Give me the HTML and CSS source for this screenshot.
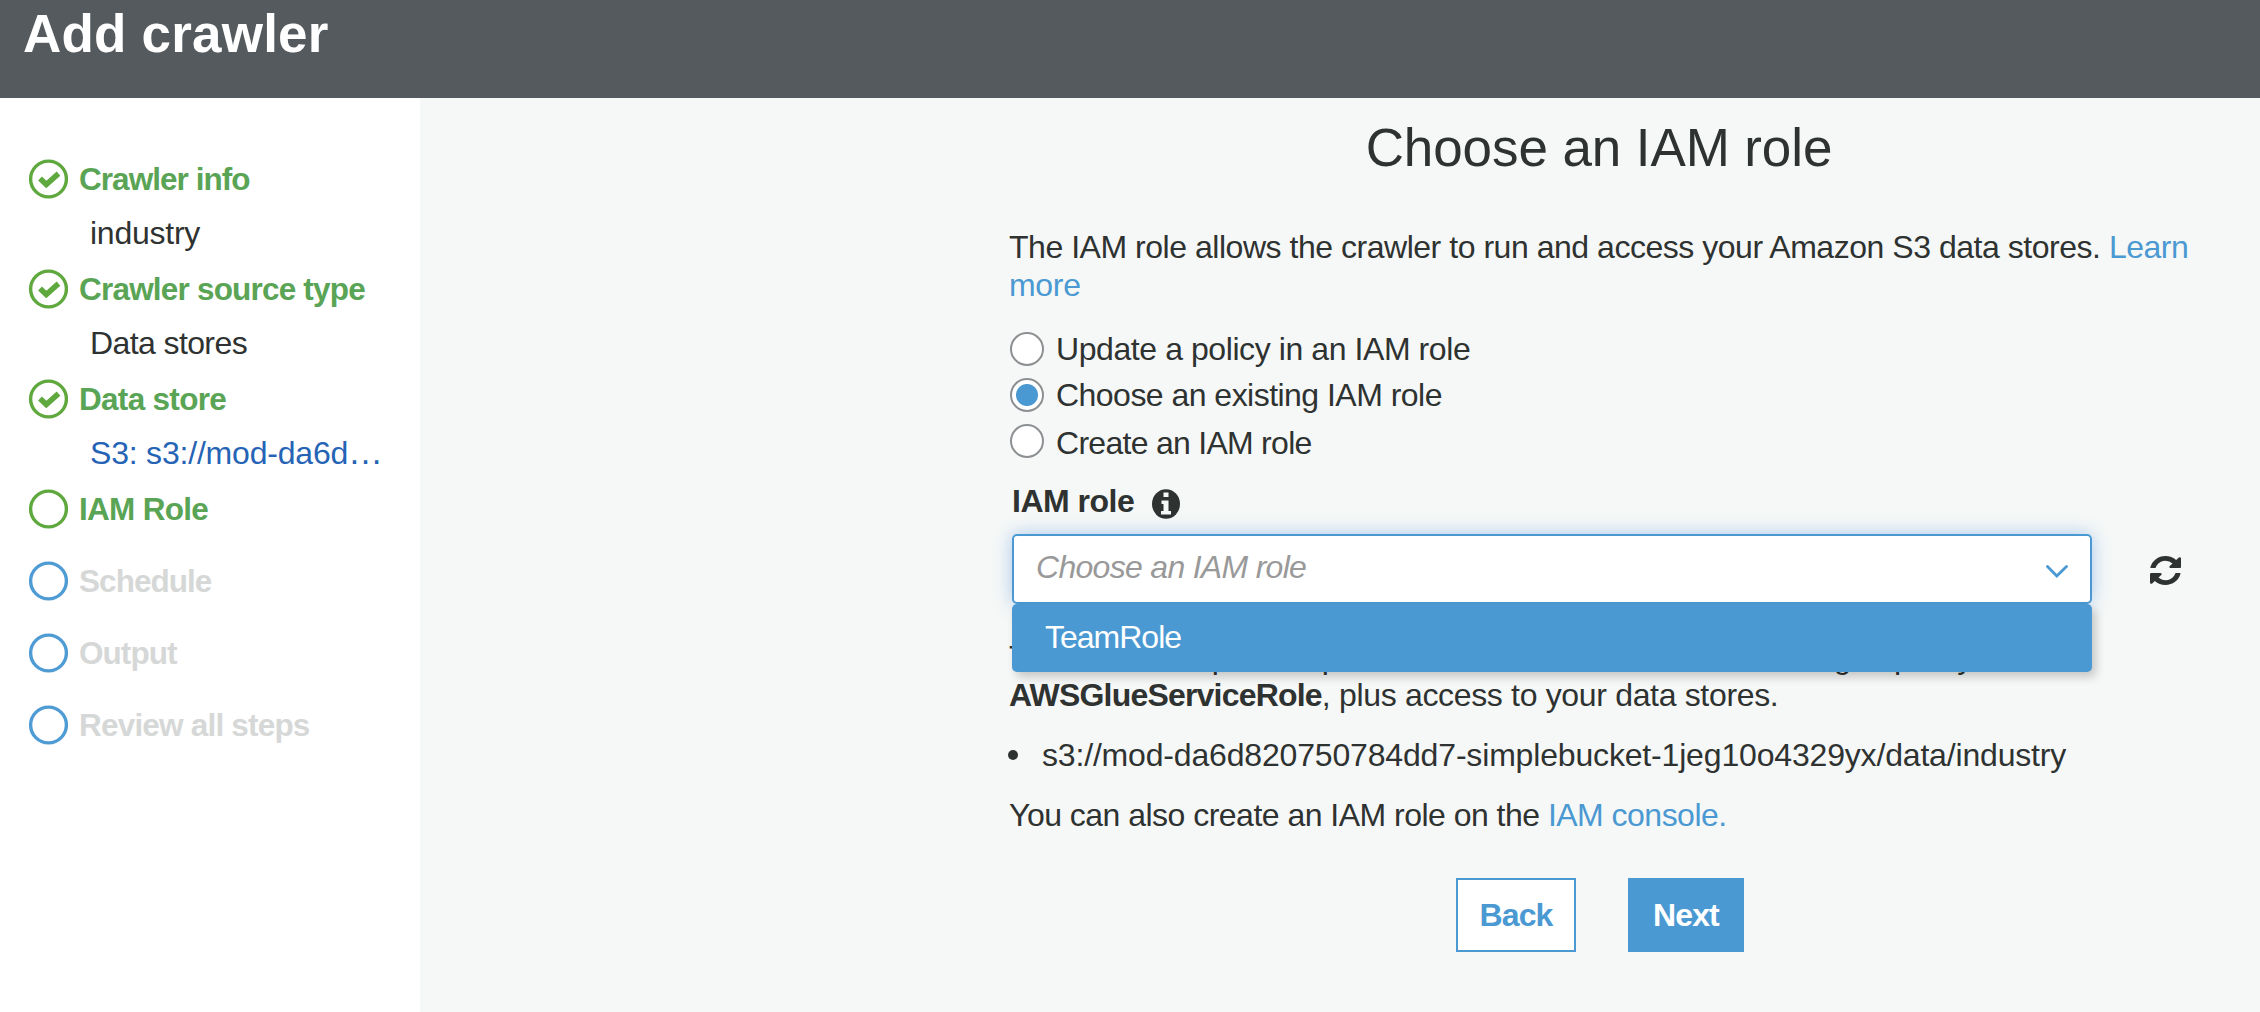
FILE: index.html
```html
<!DOCTYPE html>
<html lang="en">
<head>
<meta charset="utf-8">
<title>Add crawler</title>
<link rel="stylesheet" href="styles.css">
</head>
<body>
<header class="header"><h1 class="title"><span>Add crawler</span></h1></header>
<div class="layout">
  <nav class="sidebar">
    <div class="step done"><svg class="ring" viewBox="0 0 40 40"><circle cx="20.500" cy="20" r="17.900"/><path d="M12 19.500l6.300 6.100 12.200-11"/></svg><span class="name t-info">Crawler info</span></div>
    <div class="detail"><span class="t-ind">industry</span></div>
    <div class="step done"><svg class="ring" viewBox="0 0 40 40"><circle cx="20.500" cy="20" r="17.900"/><path d="M12 19.500l6.300 6.100 12.200-11"/></svg><span class="name t-src">Crawler source type</span></div>
    <div class="detail"><span class="t-stores">Data stores</span></div>
    <div class="step done"><svg class="ring" viewBox="0 0 40 40"><circle cx="20.500" cy="20" r="17.900"/><path d="M12 19.500l6.300 6.100 12.200-11"/></svg><span class="name t-store">Data store</span></div>
    <div class="detail link-dark"><span class="t-s3">S3: s3://mod-da6d<span class="dots">…</span></span></div>
    <div class="step done open"><svg class="ring" viewBox="0 0 40 40"><circle cx="20.500" cy="20" r="17.900"/></svg><span class="name t-role">IAM Role</span></div>
    <div class="step todo open"><svg class="ring" viewBox="0 0 40 40"><circle cx="20.500" cy="20" r="17.900"/></svg><span class="name t-sch">Schedule</span></div>
    <div class="step todo open"><svg class="ring" viewBox="0 0 40 40"><circle cx="20.500" cy="20" r="17.900"/></svg><span class="name t-out">Output</span></div>
    <div class="step todo open"><svg class="ring" viewBox="0 0 40 40"><circle cx="20.500" cy="20" r="17.900"/></svg><span class="name t-rev">Review all steps</span></div>
  </nav>
  <main class="main">
    <div class="panel">
      <h2 class="heading"><span>Choose an IAM role</span></h2>
      <p class="intro"><span class="t-intro">The IAM role allows the crawler to run and access your Amazon S3 data stores. <a>Learn</a></span><br><a class="t-more">more</a></p>
      <div class="radios">
        <label class="radio"><i class="knob"></i><span class="t-r1">Update a policy in an IAM role</span></label>
        <label class="radio"><i class="knob on"></i><span class="t-r2">Choose an existing IAM role</span></label>
        <label class="radio last"><i class="knob"></i><span class="t-r3">Create an IAM role</span></label>
      </div>
      <div class="field-label"><span class="t-lab">IAM role</span>
        <svg class="info" viewBox="0 0 28 30"><ellipse cx="14" cy="15" rx="14" ry="14.700"/><path d="M11.500 3.500h5v4.500h-5zM9.500 11.500h7v10.500h2.500v3.500h-10V22h2.500v-7h-2z"/></svg>
      </div>
      <div class="field">
        <div class="select">
          <span class="placeholder t-ph">Choose an IAM role</span>
          <svg class="chevron" viewBox="0 0 22 13"><path d="M1.500 1.500l9.300 9.500 9.700-9.500"/></svg>
          <div class="options"><span class="t-team">TeamRole</span></div>
        </div>
        <svg class="refresh" viewBox="0 0 1536 1536" preserveAspectRatio="none"><path d="M1511 928q0 5-1 7-64 268-268 434.500T764 1536q-146 0-282.500-55T238 1324l-129 129q-19 19-45 19t-45-19-19-45V960q0-26 19-45t45-19h448q26 0 45 19t19 45-19 45l-137 137q71 66 161 102t187 36q134 0 250-65t186-179q11-17 53-117 8-23 30-23h192q13 0 22.500 9.500t9.500 22.500zM1536 128v448q0 26-19 45t-45 19h-448q-26 0-45-19t-19-45 19-45l138-138Q969 256 768 256q-134 0-250 65T332 500q-11 17-53 117-8 23-30 23H50q-13 0-22.500-9.500T18 608v-7q65-268 270-434.500T768 0q146 0 284 55.500T1297 212l130-129q19-19 45-19t45 19 19 45z"/></svg>
      </div>
      <p class="policy"><span class="t-pol">This role must provide permissions similar to the AWS managed policy,</span><br><span class="t-glue"><b>AWSGlueServiceRole</b>, plus access to your data stores.</span></p>
      <ul class="paths"><li><span class="t-path">s3://mod-da6d820750784dd7-simplebucket-1jeg10o4329yx/data/industry</span></li></ul>
      <p class="note"><span class="t-note">You can also create an IAM role on the <a>IAM console.</a></span></p>
      <div class="actions"><button class="btn back">Back</button><button class="btn next">Next</button></div>
    </div>
  </main>
</div>
</body>
</html>
```
FILE: styles.css
```css
* { box-sizing: border-box; }
body { margin: 0; height: 1012px; overflow: hidden; background: #fff; color: #2e3231; font: 32px/38px "Liberation Sans", Arial, sans-serif; }
h1, h2, p, ul { margin: 0; padding: 0; }
a { color: #4b99d2; }
.header { height: 98px; background: #545a5d; color: #fff; padding: 4px 0 0 23px; }
.title { font-size: 53px; line-height: 60px; font-weight: bold; letter-spacing: .2px; }
.layout { display: flex; height: 914px; }
.sidebar { width: 420px; padding: 53px 0 0 28px; }
.step { display: flex; align-items: center; height: 55px; font-weight: bold; font-size: 31.5px; white-space: nowrap; }
.step.open { height: 72px; padding-bottom: 17px; }
.ring { width: 40px; height: 40px; margin-right: 11px; fill: none; stroke-width: 3.4; flex: none; }
.ring path { stroke-width: 5.5; }
.done { color: #5aa455; stroke: #5fa83e; }
.todo { color: #d6d8d7; stroke: #4f9cd5; }
.name { padding-top: 1px; }
.detail { height: 55px; padding: 8px 0 0 62px; white-space: nowrap; }
.link-dark { color: #2563b5; }
.main { flex: 1; background: #f6f8f7; display: flex; padding-left: 590px; }
.panel { width: 1180px; white-space: nowrap; }
.heading { padding: 20px 2px 0 0; height: 122px; font-size: 53px; line-height: 60px; font-weight: normal; text-align: center; letter-spacing: -.1px; }
.intro { height: 112px; padding: 8px 0 0; margin-left: -1px; }
.radio { display: flex; gap: 12px; height: 46px; }
.radio span { margin-top: -2px; }
.radio.last span { margin-top: 0; }
.knob { width: 34px; height: 34px; border: 2px solid #8d9092; border-radius: 50%; background: #fff; }
.knob.on { background: radial-gradient(circle, #4b99d2 10.5px, #fff 11.5px); }
.field-label { display: flex; align-items: center; gap: 18px; height: 64px; padding: 3px 0 0 2px; font-weight: bold; }
.field-label span { padding-bottom: 5px; }
.info { width: 28px; height: 30px; fill: #2e3231; }
.info path { fill: #f6f8f7; }
.field { display: flex; align-items: center; gap: 58px; padding-left: 2px; height: 70px; }
.select { position: relative; width: 1080px; height: 70px; border: 2px solid #4b99d2; border-radius: 5px; background: #fff; box-shadow: 0 0 18px rgba(75, 140, 225, .45); display: flex; align-items: center; justify-content: space-between; padding: 0 22px; }
.placeholder { color: #999; font-style: italic; padding-bottom: 5px; }
.chevron { width: 22px; height: 13px; fill: none; stroke: #4b99d2; stroke-width: 2.8; stroke-linecap: round; margin-top: 4px; }
.options { position: absolute; left: -2px; top: 68px; width: 1080px; height: 68px; padding: 14px 0 0 33px; border-radius: 5px; background: #4b99d2; color: #fff; box-shadow: 4px 5px 10px rgba(0, 0, 0, .2); }
.refresh { width: 31px; height: 29px; fill: #2e3231; margin-top: 3px; }
.policy { padding-top: 34px; height: 132px; margin-left: -1px; }
.paths { list-style: none; height: 60px; }
.paths li { display: flex; align-items: center; gap: 23px; }
.paths li::before { content: ""; width: 10px; height: 10px; margin-left: -2px; border-radius: 50%; background: #2e3231; }
.paths span { padding-left: 1px; }
.actions { display: flex; gap: 52px; padding: 44px 0 0 446px; }
.btn { height: 74px; border: 2px solid #4b99d2; font: bold 32px "Liberation Sans", Arial, sans-serif; letter-spacing: -.9px; padding: 0; }
.back { width: 120px; background: #fff; color: #4b99d2; }
.next { width: 116px; background: #4b99d2; color: #fff; }

/* tracking per label */
.t-info { letter-spacing: -.95px; }
.t-src, .t-rev { letter-spacing: -.8px; }
.t-store { letter-spacing: -.7px; }
.t-role { letter-spacing: -.7px; }
.t-sch, .t-out { letter-spacing: -.95px; }
.t-ind { letter-spacing: -.25px; }
.t-stores { letter-spacing: -.6px; }
.t-s3 { letter-spacing: -.2px; }
.dots { font-size: 35px; line-height: 30px; }
.t-intro { letter-spacing: -.47px; }
.t-more { letter-spacing: -.3px; }
.t-r1 { letter-spacing: -.42px; }
.t-r2 { letter-spacing: -.53px; }
.t-r3 { letter-spacing: -.72px; }
.t-lab { letter-spacing: -.5px; }
.t-ph { letter-spacing: -.7px; }
.t-team { letter-spacing: -1px; }
.t-pol { letter-spacing: -.48px; }
.t-glue { letter-spacing: -.33px; }
.t-glue b { letter-spacing: -.8px; }
.t-path { letter-spacing: -.17px; }
.t-note { letter-spacing: -.52px; }
.note { margin-left: -1px; }
```
